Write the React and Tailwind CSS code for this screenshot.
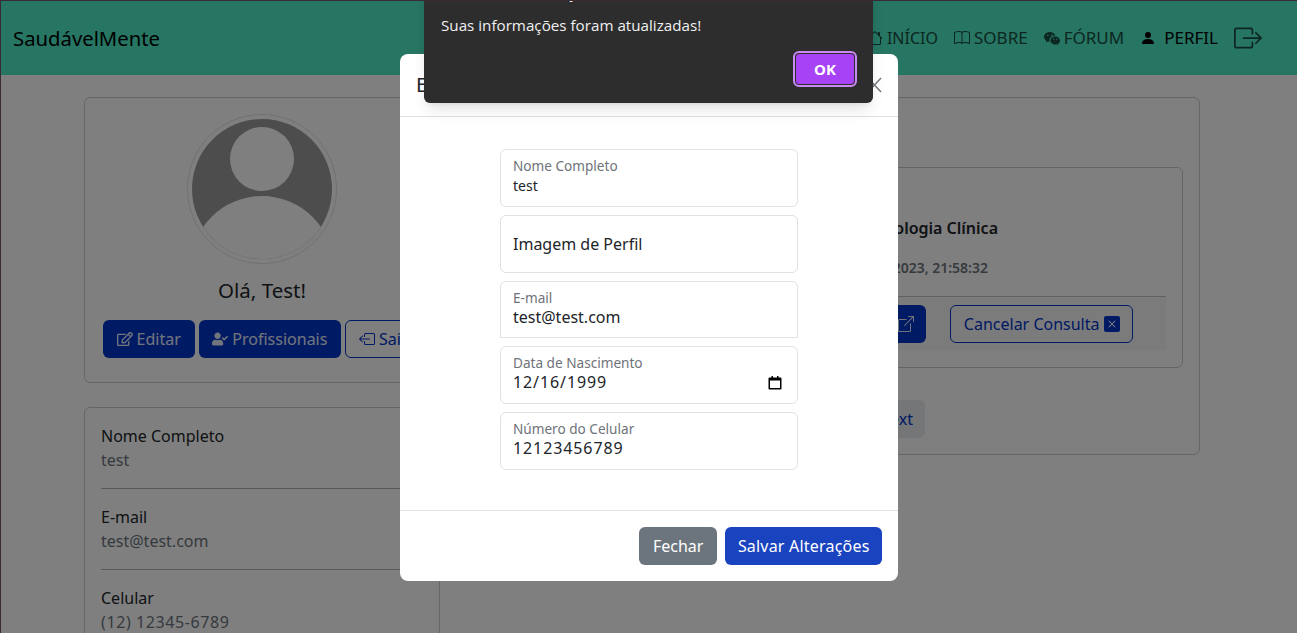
import { BsBook, BsBoxArrowLeft, BsBoxArrowRight, BsBoxArrowUpRight, BsPersonFill, BsWechat, BsXSquareFill, BsHouse } from "react-icons/bs";
import { FaRegEdit, FaUserCheck } from "react-icons/fa";

const profileRows = [
  { label: "Nome Completo", value: "test" },
  { label: "E-mail", value: "test@test.com" },
  { label: "Celular", value: "(12) 12345-6789", digits: true },
];

function NavLink({ icon, label, active, small }) {
  return (
    <a className={`flex items-center gap-1 ${small ? "text-[16px]" : "text-[17px]"} ${active ? "text-black" : "text-[#174f41]"}`}>
      {icon}
      {label}
    </a>
  );
}

function Avatar() {
  return (
    <div className="w-[150px] h-[150px] rounded-full border border-[#dee2e6] p-1">
      <svg viewBox="0 0 140 140" className="w-full h-full">
        <clipPath id="avatar-clip">
          <circle cx="70" cy="70" r="70" />
        </clipPath>
        <g clipPath="url(#avatar-clip)">
          <rect width="140" height="140" fill="#9a9a9a" />
          <circle cx="70" cy="40" r="32" fill="#fff" />
          <circle cx="70" cy="148.6" r="71.6" fill="#fff" />
        </g>
      </svg>
    </div>
  );
}

function Field({ label, value, icon, clipped, digits }) {
  return (
    <div className={`relative w-[298px] bg-white border border-[#dee2e6] px-3 ${clipped ? "h-[57px] rounded-t-md" : "h-[58px] rounded-md"}`}>
      <div className="pt-[7px] text-[13.6px] leading-[18px] text-[#6e7379]">{label}</div>
      <div className={`text-[16px] leading-[21px] text-[#212529] ${digits ? "tracking-[0.9px]" : ""}`}>{value}</div>
      {icon}
    </div>
  );
}

function CalendarIcon() {
  return (
    <svg viewBox="0 0 14 14" className="absolute right-[15px] top-[29px] w-[14px] h-[14px]">
      <path fill="#000" d="M1.5 1.5h2V0h1.5v1.5h4V0h1.5v1.5h2A1 1 0 0 1 13.5 2.5v10a1 1 0 0 1-1 1h-11a1 1 0 0 1-1-1v-10a1 1 0 0 1 1-1zM2 4.5v7.6h10V4.5z" />
    </svg>
  );
}

export default function App() {
  return (
    <div className="relative h-screen overflow-hidden bg-white border-l border-t border-[#3a2a35] text-[#212529] font-['Noto_Sans',sans-serif]">
      <nav className="h-[74px] bg-[#4eeac6] flex items-center pl-3 pr-[35px]">
        <span className="text-[20.3px] text-black">SaudávelMente</span>
        <div className="ml-auto flex items-center gap-4">
          <NavLink small icon={<BsHouse className="w-4 h-4" />} label="INÍCIO" />
          <NavLink icon={<BsBook className="w-4 h-4" />} label="SOBRE" />
          <NavLink icon={<BsWechat className="w-4 h-4" />} label="FÓRUM" />
          <NavLink active icon={<BsPersonFill className="w-4 h-4 mr-1" />} label="PERFIL" />
          <BsBoxArrowRight className="w-7 h-7 text-[#174f41]" />
        </div>
      </nav>

      <main className="flex gap-[25px] pl-[83px] pt-[22px]">
        <div className="w-[356px] shrink-0 flex flex-col gap-6">
          <section className="h-[286px] rounded-md border border-black/20 flex flex-col items-center pt-[16px]">
            <Avatar />
            <h2 className="mt-[11px] text-[20.5px]">Olá, Test!</h2>
            <div className="mt-[14px] flex gap-1">
              <button className="h-[38px] px-[14px] rounded-md bg-[#0034c8] text-white/90 flex items-center gap-1"><FaRegEdit /> Editar</button>
              <button className="h-[38px] px-[13.5px] rounded-md bg-[#0034c8] text-white/90 flex items-center gap-1"><FaUserCheck /> Profissionais</button>
              <button className="h-[38px] px-[13px] rounded-md border border-[#0034c8] text-[#0034c8] flex items-center gap-1"><BsBoxArrowLeft /> Sair</button>
            </div>
          </section>
          <section className="rounded-md border border-black/20 px-4 pt-[16px] pb-4">
            {profileRows.map((row) => (
              <div key={row.label} className="border-b border-black/30 last:border-0 pb-4 mb-4 leading-6">
                <div className="text-[#212529]">{row.label}</div>
                <div className={`text-[#6c757d] ${row.digits ? "tracking-[0.6px]" : ""}`}>{row.value}</div>
              </div>
            ))}
          </section>
        </div>

        <section className="w-[735px] h-[358px] rounded-md border border-black/20 px-4 pt-[69px]">
          <div className="h-[201px] rounded-md border border-black/20 px-4 pt-[48px]">
            <div className="text-right pr-[168px] font-semibold">Psicologia Clínica</div>
            <div className="mt-[17px] text-right pr-[178px] text-[14px] font-semibold text-[#6c757d]">12/12/2023, 21:58:32</div>
            <div className="mt-[18px] h-[54px] bg-black/[0.03] border-t border-black/20 flex items-center justify-end gap-6 pr-[33px]">
              <button className="h-[38px] w-[80px] rounded-md bg-[#0034c8] text-white/90 flex items-center justify-end pr-3"><BsBoxArrowUpRight /></button>
              <button className="h-[38px] px-[12.5px] rounded-md border border-[#0034c8] text-[#0034c8] flex items-center gap-1">Cancelar Consulta <BsXSquareFill /></button>
            </div>
          </div>
          <div className="mt-[32px] ml-auto w-[80px] mr-[258px] h-[38px] rounded-md bg-[#e9ecef] text-[#0034c8] flex items-center justify-end pr-3">Next</div>
        </section>
      </main>

      {/* backdrop */}
      <div className="absolute inset-0 bg-black/50" />

      {/* edit modal */}
      <div className="absolute left-[399px] top-[53px] w-[498px] h-[527px] bg-white rounded-lg flex flex-col">
        <div className="h-[63px] shrink-0 border-b border-[#dee2e6] flex items-center justify-between px-4">
          <h5 className="text-[20px]">Editar Perfil</h5>
          <svg viewBox="0 0 16 16" className="w-4 h-4 text-[#6c757d]"><path d="M2 1l13 14M15 1L2 15" stroke="currentColor" strokeWidth="1.4" fill="none" /></svg>
        </div>
        <div className="flex-1 flex flex-col items-center gap-2 pt-8">
          <Field label="Nome Completo" value={<span className="text-[14px]">test</span>} />
          <div className="h-[58px] w-[298px] border border-[#dee2e6] rounded-md px-3 flex items-center text-[16px]">Imagem de Perfil</div>
          <Field label="E-mail" value="test@test.com" clipped />
          <Field label="Data de Nascimento" value="12/16/1999" digits icon={<CalendarIcon />} />
          <Field label="Número do Celular" value="12123456789" digits />
        </div>
        <div className="h-[71px] shrink-0 border-t border-[#dee2e6] flex items-center justify-end gap-2 pr-4">
          <button className="h-[38px] px-[14px] rounded-md bg-[#6c757d] text-white">Fechar</button>
          <button className="h-[38px] px-[12.5px] rounded-md bg-[#1a43bf] text-white tracking-[0.2px]">Salvar Alterações</button>
        </div>
      </div>

      {/* alert dialog, its title runs off the top of the window */}
      <div className="absolute left-[423px] -top-[35px] w-[449px] h-[137px] bg-[#2d2d2d] rounded-b-md shadow-lg pl-[17px] pt-[16px] font-['Open_Sans',sans-serif] text-[#f0f0f0]">
        <p className="text-[16px] leading-[20px]">localhost:3000 says</p>
        <p className="mt-[13px] text-[15.2px] leading-[20px]">Suas informações foram atualizadas!</p>
        <button className="absolute right-[18px] bottom-[18px] w-[60px] h-[32px] rounded-[4px] bg-[#a742f5] outline-2 outline-[#c98af5] border border-[#2d2d2d] text-white text-[15px] font-bold">OK</button>
      </div>
    </div>
  );
}
